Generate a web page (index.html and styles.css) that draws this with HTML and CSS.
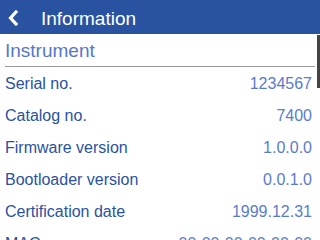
FILE: index.html
```html
<!DOCTYPE html>
<html>
<head>
<meta charset="utf-8">
<link rel="stylesheet" href="styles.css">
</head>
<body>
<div class="screen">
  <header class="topbar">
    <svg class="back" width="12" height="16" viewBox="0 0 12 16"><path d="M9 2 L3.5 8 L9 14" fill="none" stroke="#fff" stroke-width="3.2" stroke-linecap="square" stroke-linejoin="miter"/></svg>
    <span class="title">Information</span>
  </header>
  <main class="content">
    <h2 class="section">Instrument</h2>
    <div class="rows">
      <div class="row"><span class="label">Serial no.</span><span class="value">1234567</span></div>
      <div class="row"><span class="label">Catalog no.</span><span class="value">7400</span></div>
      <div class="row"><span class="label">Firmware version</span><span class="value">1.0.0.0</span></div>
      <div class="row"><span class="label">Bootloader version</span><span class="value">0.0.1.0</span></div>
      <div class="row"><span class="label">Certification date</span><span class="value">1999.12.31</span></div>
      <div class="row"><span class="label">MAC</span><span class="value">00-00-00-00-00-00</span></div>
    </div>
  </main>
  <div class="scrollbar"></div>
</div>
</body>
</html>
```
FILE: styles.css
```css
html, body {
  margin: 0;
  padding: 0;
  background: #fff;
  overflow: hidden;
}
body {
  font-family: "Liberation Sans", Arial, sans-serif;
}
.screen {
  position: relative;
  width: 320px;
  height: 240px;
  overflow: hidden;
}
.topbar {
  height: 34px;
  background: #2953a0;
  display: flex;
  align-items: center;
  padding-top: 2px;
  box-sizing: border-box;
}
.back {
  margin-left: 7px;
  flex: none;
}
.title {
  margin-left: 22px;
  margin-top: 2px;
  color: #fff;
  font-size: 19px;
  line-height: 24px;
}
.content {
  padding: 0 5px 0 5px;
}
.section {
  margin: 0;
  padding-top: 3px;
  font-weight: normal;
  font-size: 19px;
  line-height: 28px;
  color: #5677c8;
  height: 33px;
  box-sizing: border-box;
  border-bottom: 1px solid #999;
  width: 310px;
}
.rows {
  width: 307px;
  padding-top: 1px;
}
.row {
  display: flex;
  justify-content: space-between;
  font-size: 16px;
  line-height: 32px;
  white-space: nowrap;
}
.label {
  color: #2a52a0;
}
.value {
  color: #5a7bca;
}
.scrollbar {
  position: absolute;
  left: 317px;
  top: 35px;
  width: 3px;
  height: 53px;
  background: #444;
}
```
